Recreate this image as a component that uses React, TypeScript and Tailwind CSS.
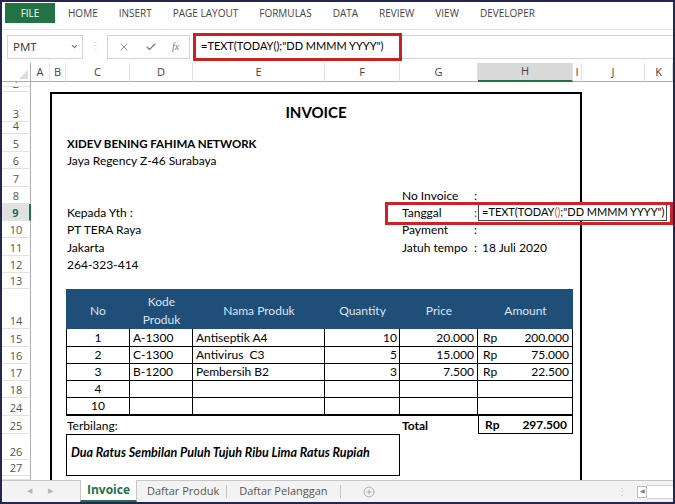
import { X, Check, ChevronDown, CirclePlus } from "lucide-react";

const tabs = ["HOME", "INSERT", "PAGE LAYOUT", "FORMULAS", "DATA", "REVIEW", "VIEW", "DEVELOPER"];

const colHeaders = [
  { label: "A", cls: "col-start-2" },
  { label: "B", cls: "col-start-3" },
  { label: "C", cls: "col-start-4" },
  { label: "D", cls: "col-start-5" },
  { label: "E", cls: "col-start-6" },
  { label: "F", cls: "col-start-7" },
  { label: "G", cls: "col-start-8" },
  { label: "H", cls: "col-start-9", active: true },
  { label: "I", cls: "col-start-10" },
  { label: "J", cls: "col-start-11" },
  { label: "K", cls: "col-start-12" },
];

const rowHeaders = [
  { label: "1", cls: "row-start-2" },
  { label: "2", cls: "row-start-3" },
  { label: "3", cls: "row-start-4" },
  { label: "4", cls: "row-start-5" },
  { label: "5", cls: "row-start-6" },
  { label: "6", cls: "row-start-7" },
  { label: "7", cls: "row-start-8" },
  { label: "8", cls: "row-start-9" },
  { label: "9", cls: "row-start-10", active: true },
  { label: "10", cls: "row-start-11" },
  { label: "11", cls: "row-start-12" },
  { label: "12", cls: "row-start-13" },
  { label: "13", cls: "row-start-14" },
  { label: "14", cls: "row-start-15" },
  { label: "15", cls: "row-start-16" },
  { label: "16", cls: "row-start-17" },
  { label: "17", cls: "row-start-18" },
  { label: "18", cls: "row-start-19" },
  { label: "24", cls: "row-start-20" },
  { label: "25", cls: "row-start-21" },
  { label: "26", cls: "row-start-22" },
  { label: "27", cls: "row-start-23" },
  { label: "", cls: "row-start-24" },
];

const items = [
  { row: "row-start-16", no: "1", kode: "A-1300", nama: "Antiseptik A4", qty: "10", price: "20.000", amount: "200.000" },
  { row: "row-start-17", no: "2", kode: "C-1300", nama: "Antivirus  C3", qty: "5", price: "15.000", amount: "75.000" },
  { row: "row-start-18", no: "3", kode: "B-1200", nama: "Pembersih B2", qty: "3", price: "7.500", amount: "22.500" },
  { row: "row-start-19", no: "4", kode: "", nama: "", qty: "", price: "", amount: "" },
  { row: "row-start-20", no: "10", kode: "", nama: "", qty: "", price: "", amount: "", last: true },
];

// excel puts text at the bottom of a cell
const txt = "flex items-end leading-[14px] pb-px";
const head = "bg-[#1f4e79] text-[#dbe5f1] row-start-15 flex items-center justify-center text-center leading-[18px] pt-[3px]";

export default function App() {
  return (
    <div className="w-[675px] h-[504px] overflow-hidden border-2 border-[#23264f] bg-white flex flex-col [font-family:Lato,sans-serif] text-[12px] text-black">
      {/* ribbon tabs */}
      <div className="h-[27px] flex items-start shrink-0 [font-family:'Open_Sans',sans-serif] text-[10px] text-[#444]">
        <div className="ml-[3px] mt-[1px] w-[50px] h-[20px] bg-[#217346] text-white flex items-center justify-center">FILE</div>
        <div className="flex gap-[21px] ml-[13px] h-[23px] items-center">
          {tabs.map((t) => (
            <span key={t}>{t}</span>
          ))}
        </div>
      </div>

      {/* formula bar */}
      <div className="h-[34px] flex items-center shrink-0 border-t border-[#e6e6e6]">
        <div className="ml-[5px] w-[76px] h-[24px] border border-[#d4d4d4] flex items-center justify-between pl-[5px] pr-[3px] text-[11.5px] text-[#333] [font-family:'Open_Sans',sans-serif]">
          PMT
          <ChevronDown size={9} strokeWidth={3} className="text-[#777]" />
        </div>
        <div className="w-[24px] text-center text-[#c8c8c8] text-[11px]">⋮</div>
        <div className="w-[83px] h-[24px] border border-[#d4d4d4] flex items-center gap-[15px] pl-[10px] text-[#777]">
          <X size={12} strokeWidth={1.6} />
          <Check size={12} strokeWidth={2.2} />
          <span className="italic text-[10px] [font-family:'Liberation_Serif',serif]">fx</span>
        </div>
        <div className="ml-[3px] w-[209px] h-[28px] border-[3px] border-[#c9211e] flex items-center pl-[5px] text-[11px] whitespace-nowrap">
          =TEXT(TODAY();"DD MMMM YYYY")
        </div>
        <div className="flex-1 h-[24px] border-y border-[#d4d4d4]"></div>
      </div>

      {/* sheet */}
      <div className="grid grid-cols-[29px_19px_16px_64px_63px_132px_75px_78px_95px_9px_63px_1fr] grid-rows-[19px_5px_5px_30px_12px_18px_17px_18px_17px_17px_17px_18px_17px_16px_40px_18px_17px_17px_17px_18px_18px_26px_16px_4px] h-[417px] overflow-hidden shrink-0">
        {/* corner */}
        <div className="col-start-1 row-start-1 border-r border-b border-[#ababab] flex items-end justify-end p-[2px]">
          <div className="w-0 h-0 border-l-[9px] border-l-transparent border-b-[9px] border-b-[#dcdcdc]"></div>
        </div>
        {colHeaders.map((c) => (
          <div
            key={c.label}
            className={`${c.cls} row-start-1 flex items-center justify-center text-[11px] text-[#444] [font-family:'Open_Sans',sans-serif] border-r border-[#e1e1e1] ${
              c.active ? "bg-[#d9d9d9] border-b-2 border-b-[#217346]" : "border-b border-b-[#ababab]"
            }`}
          >
            {c.label}
          </div>
        ))}
        {rowHeaders.map((r) => (
          <div
            key={r.cls}
            className={`${r.cls} col-start-1 flex items-end justify-center overflow-hidden leading-[14px] text-[11px] [font-family:'Open_Sans',sans-serif] border-b border-[#e1e1e1] ${
              r.active ? "bg-[#e1e1e1] border-r-2 border-r-[#217346] text-[#217346] font-bold" : "border-r border-r-[#ababab] text-[#555]"
            }`}
          >
            {r.label}
          </div>
        ))}

        {/* invoice frame */}
        <div className="col-start-3 col-end-11 row-start-4 row-end-25 border-l-2 border-t-2 border-r-2 border-black"></div>

        <div className="col-start-3 col-end-11 row-start-4 flex items-end justify-center font-bold text-[15px] leading-[20px]">INVOICE</div>

        <div className={`col-start-4 col-end-8 row-start-6 ${txt} pl-[1px] font-bold text-[11.5px] whitespace-nowrap`}>XIDEV BENING FAHIMA NETWORK</div>
        <div className={`col-start-4 col-end-8 row-start-7 ${txt} pl-[1px] whitespace-nowrap`}>Jaya Regency Z-46 Surabaya</div>
        <div className={`col-start-4 col-end-8 row-start-10 ${txt} pl-[1px]`}>Kepada Yth :</div>
        <div className={`col-start-4 col-end-8 row-start-11 ${txt} pl-[1px]`}>PT TERA Raya</div>
        <div className={`col-start-4 col-end-8 row-start-12 ${txt} pl-[1px]`}>Jakarta</div>
        <div className={`col-start-4 col-end-8 row-start-13 ${txt} pl-[1px]`}>264-323-414</div>

        <div className={`col-start-8 row-start-9 ${txt} justify-between pl-[2px] pr-[1px]`}>
          <span>No Invoice</span>
          <span>:</span>
        </div>
        <div className={`col-start-8 row-start-10 ${txt} justify-between pl-[2px] pr-[1px]`}>
          <span>Tanggal</span>
          <span className="text-[#217346]">:</span>
        </div>
        <div className="col-start-9 col-end-13 row-start-10 w-[189px] border border-[#444] flex items-center pl-[3px] whitespace-nowrap bg-white text-[11px]">
          =TEXT(TODAY<span className="text-[#d9534f]">()</span>;"DD MMMM YYYY")
        </div>
        <div className={`col-start-8 row-start-11 ${txt} justify-between pl-[2px] pr-[1px]`}>
          <span>Payment</span>
          <span>:</span>
        </div>
        <div className={`col-start-8 row-start-12 ${txt} justify-between pl-[2px] pr-[1px]`}>
          <span>Jatuh tempo</span>
          <span>:</span>
        </div>
        <div className={`col-start-9 row-start-12 ${txt} pl-[4px]`}>18 Juli 2020</div>

        {/* table header */}
        <div className={`${head} col-start-4`}>No</div>
        <div className={`${head} col-start-5`}>
          Kode
          <br />
          Produk
        </div>
        <div className={`${head} col-start-6`}>Nama Produk</div>
        <div className={`${head} col-start-7`}>Quantity</div>
        <div className={`${head} col-start-8`}>Price</div>
        <div className={`${head} col-start-9`}>Amount</div>

        {items.map((it) => {
          const b = it.last ? "border-b-2" : "border-b";
          return [
            <div key={it.row + "a"} className={`${it.row} col-start-4 border-l border-r ${b} border-black ${txt} justify-center`}>{it.no}</div>,
            <div key={it.row + "b"} className={`${it.row} col-start-5 border-r ${b} border-black ${txt} pl-[3px]`}>{it.kode}</div>,
            <div key={it.row + "c"} className={`${it.row} col-start-6 border-r ${b} border-black ${txt} pl-[3px] whitespace-pre`}>{it.nama}</div>,
            <div key={it.row + "d"} className={`${it.row} col-start-7 border-r ${b} border-black ${txt} justify-end pr-[2px]`}>{it.qty}</div>,
            <div key={it.row + "e"} className={`${it.row} col-start-8 border-r ${b} border-black ${txt} justify-end pr-[3px]`}>{it.price}</div>,
            <div key={it.row + "f"} className={`${it.row} col-start-9 border-r ${b} border-black ${txt} justify-between pl-[5px] pr-[3px]`}>
              <span>{it.amount ? "Rp" : ""}</span>
              <span>{it.amount}</span>
            </div>,
          ];
        })}

        {/* total row */}
        <div className={`col-start-4 col-end-7 row-start-21 ${txt} pl-[1px]`}>Terbilang:</div>
        <div className={`col-start-8 row-start-21 ${txt} pl-[2px] font-bold`}>Total</div>
        <div className={`col-start-9 row-start-21 border-l border-r border-b border-black ${txt} justify-between pl-[6px] pr-[5px] font-bold`}>
          <span>Rp</span>
          <span>297.500</span>
        </div>

        <div className="col-start-4 col-end-8 row-start-22 row-end-24 border border-black pl-[4px] pt-[10px] font-bold italic whitespace-nowrap leading-[16px] text-[12.5px]">
          Dua Ratus Sembilan Puluh Tujuh Ribu Lima Ratus Rupiah
        </div>

        {/* annotation */}
        <div className="col-start-7 col-end-13 row-start-10 ml-[60px] -mt-[2px] -mb-[4px] border-[3px] border-[#d0202a]"></div>
      </div>

      {/* sheet tabs */}
      <div className="flex-1 flex items-stretch border-t border-[#c6c6c6] bg-[#f3f3f3] text-[11px] [font-family:'Open_Sans',sans-serif] text-[#555]">
        <div className="w-[78px] flex items-center gap-[16px] pl-[25px] text-[7px] text-[#b5b5b5]">
          <span>◀</span>
          <span>▶</span>
        </div>
        <div className="w-[57px] bg-white border-x border-[#c6c6c6] flex items-center justify-center font-bold text-[#217346] border-b-2 border-b-[#217346] -mt-px text-[12px]">Invoice</div>
        <div className="flex items-center pl-[10px] pr-[7px]">Daftar Produk</div>
        <div className="w-px my-[4px] bg-[#c6c6c6]"></div>
        <div className="flex items-center pl-[12px] pr-[12px]">Daftar Pelanggan</div>
        <div className="w-px my-[4px] bg-[#c6c6c6]"></div>
        <div className="flex items-center pl-[22px] text-[#888]">
          <CirclePlus size={12} strokeWidth={1.3} />
        </div>
        <div className="flex-1"></div>
        <div className="flex items-center text-[#c0c0c0] text-[10px] mr-[10px]">⋮</div>
        <div className="flex items-center">
          <div className="w-[10px] h-[12px] border border-[#bbb] bg-white flex items-center justify-center text-[6px] text-[#777]">◀</div>
          <div className="w-[26px] h-[14px] border-y border-[#d0d0d0] bg-white"></div>
        </div>
      </div>
    </div>
  );
}
